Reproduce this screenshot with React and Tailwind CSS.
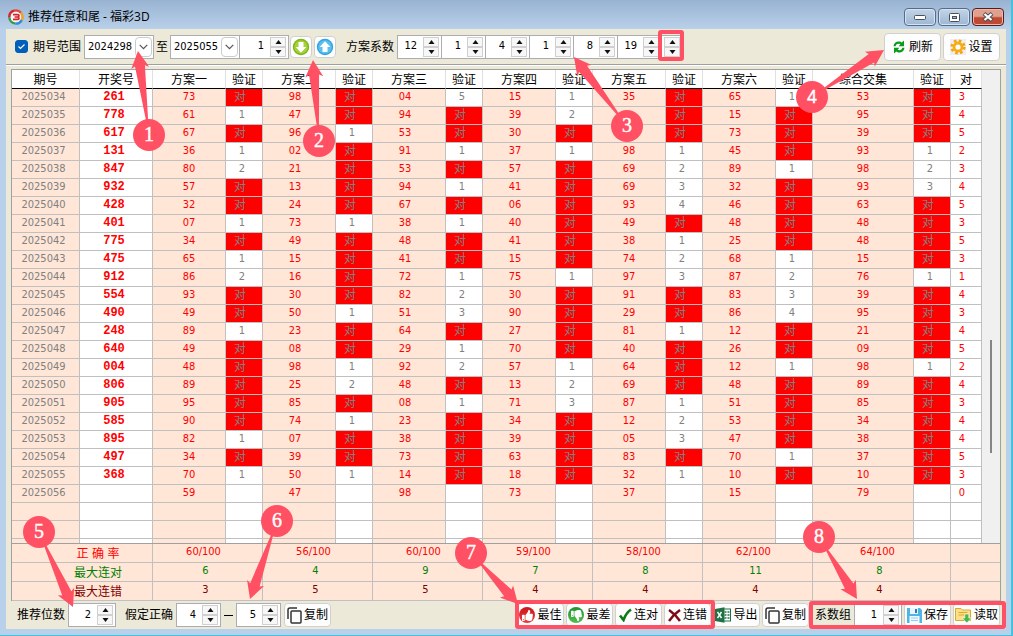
import React, { useState } from 'react';
import { FaThumbsUp, FaThumbsDown } from 'react-icons/fa';

// issue | drawn number | (pick, check) x 6 | combined pick, check | hit count. "x" is a hit
const RAW = `
2025034 261 73 x 98 x 04 5 15 1 35 x 65 1 53 x 3
2025035 778 61 1 47 x 94 x 39 2 - x 15 x 95 x 4
2025036 617 67 x 96 1 53 x 30 x - x 73 x 39 x 5
2025037 131 36 1 02 x 91 1 37 1 98 1 45 x 93 1 2
2025038 847 80 2 21 x 53 x 57 x 69 2 89 1 98 2 3
2025039 932 57 x 13 x 94 1 41 x 69 3 32 x 93 3 4
2025040 428 32 x 24 x 67 x 06 x 93 4 46 x 63 x 5
2025041 401 07 1 73 1 38 1 40 x 49 x 48 x 48 x 3
2025042 775 34 x 49 x 48 x 41 x 38 1 25 x 48 x 5
2025043 475 65 1 15 x 41 x 15 x 74 2 68 1 15 x 3
2025044 912 86 2 16 x 72 1 75 1 97 3 87 2 76 1 1
2025045 554 93 x 30 x 82 2 30 x 91 x 83 3 39 x 4
2025046 490 49 x 50 1 51 3 90 x 29 x 86 4 95 x 3
2025047 248 89 1 23 x 64 x 27 x 81 1 12 x 21 x 4
2025048 640 49 x 08 x 29 1 70 x 40 x 26 x 09 x 5
2025049 004 48 x 98 1 92 2 57 1 64 x 12 1 98 1 2
2025050 806 89 x 25 2 48 x 13 2 69 x 48 x 89 x 4
2025051 905 95 x 85 x 08 1 71 3 87 1 51 x 85 x 3
2025052 585 90 x 74 1 23 x 34 x 12 2 53 x 34 x 4
2025053 895 82 1 07 x 38 x 39 x 05 3 47 x 38 x 4
2025054 497 34 x 39 x 73 x 63 x 83 x 70 1 37 x 5
2025055 368 70 1 50 1 14 x 18 x 32 1 10 x 10 x 3
2025056 - 59 - 47 - 98 - 73 - 37 - 15 - 79 - 0`;

const EMPTY_ROW = Array(17).fill('-');
const ROWS = [...RAW.trim().split('\n').map((l) => l.split(' ')), EMPTY_ROW, EMPTY_ROW, EMPTY_ROW];

const HEADERS = ['期号', '开奖号', '方案一', '验证', '方案二', '验证', '方案三', '验证', '方案四', '验证', '方案五', '验证', '方案六', '验证', '综合交集', '验证', '对'];

const COL_WIDTHS = [
  'w-[68px]', 'w-[73px]',
  'w-[73px]', 'w-[37px]', 'w-[73px]', 'w-[37px]', 'w-[73px]', 'w-[37px]',
  'w-[73px]', 'w-[37px]', 'w-[73px]', 'w-[37px]', 'w-[73px]', 'w-[37px]',
  '', 'w-[37px]', 'w-[31px]',
];

const SUMMARY = [
  { label: '正 确 率', color: 'text-[#ff0000]', pad: 'pr-2', values: ['60/100', '56/100', '60/100', '59/100', '58/100', '62/100', '64/100'] },
  { label: '最大连对', color: 'text-[#008000]', pad: 'pr-1', values: ['6', '4', '9', '7', '8', '11', '8'] },
  { label: '最大连错', color: 'text-[#800000]', pad: 'pr-1', values: ['3', '5', '5', '4', '4', '4', '4'] },
];

const NUM = "font-['DejaVu_Sans_Condensed','DejaVu_Sans','Noto_Sans_CJK_SC',sans-serif] text-[11px]";

const cellClass = (i, value) => {
  if (i === 0) return 'bg-[#ffe6d7] text-[#808080] pr-1';
  if (i === 1) return "bg-white text-[#ff0000] pr-1 font-bold font-['Liberation_Mono',monospace] text-[12px]";
  if (i === 16) return 'bg-white text-[#ff0000] pr-2';
  if (i % 2 === 1) {
    return value === 'x' ? 'bg-[#ff0000] text-[#808080] text-[12px] pr-2' : 'bg-white text-[#808080] pr-1';
  }
  if (i === 2 || i === 10 || i === 14) return 'bg-[#ffe6d7] text-[#ff0000]';
  return 'bg-[#ffe6d7] text-[#ff0000] pr-2';
};

const Combo = ({ value, label }) => (
  <div className="relative w-[70px] h-6 shrink-0">
    <select aria-label={label} defaultValue={value} className={`${NUM} appearance-none w-full h-full pl-[3px] bg-white border border-[#abadb3] outline-none`}>
      <option>{value}</option>
    </select>
    <span className="absolute right-[2px] top-[2px] w-[17px] h-5 bg-white border border-[#cccccc] rounded-sm flex items-center justify-center pointer-events-none">
      <svg width="9" height="6" viewBox="0 0 9 6" fill="none" stroke="#555" strokeWidth="1.2"><path d="M.7.8 4.5 4.6 8.3.8" /></svg>
    </span>
  </div>
);

const SpinButtons = ({ onStep }) => (
  <div className="flex flex-col shrink-0 w-4 h-5">
    <button aria-label="增加" onClick={() => onStep(1)} className="h-[10px] bg-[#f7f7f7] border border-[#d0d0d0] flex items-center justify-center">
      <svg width="7" height="4" viewBox="0 0 7 4"><path d="M3.5 0 6.5 4H.5z" fill="#111" /></svg>
    </button>
    <button aria-label="减少" onClick={() => onStep(-1)} className="h-[10px] bg-[#f7f7f7] border border-[#d0d0d0] flex items-center justify-center">
      <svg width="7" height="4" viewBox="0 0 7 4"><path d="M3.5 4 6.5 0H.5z" fill="#111" /></svg>
    </button>
  </div>
);

const Spinner = ({ initial, label, id, className }) => {
  const [value, setValue] = useState(initial);

  return (
    <div className={`flex items-center h-6 shrink-0 bg-white border border-[#abadb3] pr-[2px] ${className}`}>
      <input
        id={id}
        aria-label={label}
        type="text"
        value={value}
        onChange={(e) => setValue(Number(e.target.value) || 0)}
        className={`${NUM} flex-1 min-w-0 h-full text-right pr-[6px] pb-[2px] bg-transparent outline-none`}
      />
      <SpinButtons onStep={(d) => setValue(value + d)} />
    </div>
  );
};

const ToolButton = ({ icon, children, className = 'w-[47px] h-6' }) => (
  <button className={`flex items-center justify-center gap-[2px] shrink-0 bg-[#fdfdfd] border border-[#d0d0d0] rounded whitespace-nowrap ${className}`}>
    {icon}
    <span>{children}</span>
  </button>
);

const Logo = () => (
  <svg width="16" height="16" viewBox="0 0 16 16" fill="none" strokeWidth="2.4">
    <circle cx="8" cy="8" r="5.5" fill="#f4f4f4" />
    <path d="M1.3 8.5A6.6 6.6 0 0 1 6 1.7" stroke="#d8232a" />
    <path d="M6 1.7A6.6 6.6 0 0 1 13 3.8" stroke="#e8453a" />
    <path d="M13 3.8a6.6 6.6 0 0 1 .8 7.3" stroke="#f0a020" />
    <path d="M13.8 11.1A6.6 6.6 0 0 1 7.5 14.6" stroke="#2d8fd5" />
    <path d="M7.5 14.6A6.6 6.6 0 0 1 1.3 8.5" stroke="#2f9e48" />
    <path d="M5 5.6h4.6q1.4 0 1.4 1.2T9.6 8H6.6 9.6q1.4 0 1.4 1.2T9.6 10.4H5" stroke="#d8232a" strokeWidth="1.7" />
  </svg>
);

const CircleArrow = ({ up }) => (
  <svg width="18" height="18" viewBox="0 0 18 18">
    <circle cx="9" cy="9" r="8.2" fill={up ? '#2fa4e0' : '#7cb51c'} />
    <circle cx="9" cy="9" r="6.8" fill={up ? '#5cc0ef' : '#a3d136'} />
    {up
      ? <path d="M9 3.3 14.3 9h-2.8v5h-5V9H3.7z" fill="#fff" />
      : <path d="M9 14.7 14.3 9h-2.8V4h-5v5H3.7z" fill="#fff" />}
  </svg>
);

const RefreshIcon = () => (
  <svg width="14" height="14" viewBox="0 0 14 14" fill="#0a9a1c">
    <path d="M1.5 6.2C1.8 2.8 4.8.8 8 1.6l1.8.8L12 .4v5.8H6.6l1.8-2C6 3.4 4.2 4 3.6 6.2z" />
    <path d="M12.5 7.8c-.3 3.4-3.3 5.4-6.5 4.6l-1.8-.8L2 13.6V7.8h5.4l-1.800 2c2.400.8 4.200.2 4.800-2z" />
  </svg>
);

const GearIcon = () => (
  <svg width="16" height="16" viewBox="0 0 16 16">
    <rect width="16" height="16" fill="#eeeef2" />
    <circle cx="8" cy="8" r="6.3" fill="none" stroke="#f5a30a" strokeWidth="2.6" strokeDasharray="2.6 2.35" />
    <circle cx="8" cy="8" r="4" fill="#fff" stroke="#f9ab12" strokeWidth="2.8" />
  </svg>
);

const CopyIcon = () => (
  <svg width="15" height="17" viewBox="0 0 15 17" fill="none" stroke="#333" strokeWidth="1.5">
    <path d="M1 12V3q0-2 2-2h7" />
    <rect x="4" y="4" width="10" height="12" rx="1" />
  </svg>
);

const ExcelIcon = () => (
  <svg width="16" height="16" viewBox="0 0 16 16" className="shrink-0">
    <rect x="8" y="2" width="7.5" height="12" fill="#fff" stroke="#1f7246" />
    <path d="M9.5 5h2M12.500 5h2M9.500 8h2M12.500 8h2M9.500 11h2M12.500 11h2" stroke="#1f7246" strokeWidth="1.600" />
    <path d="M0 2 9.5.3v15.4L0 14z" fill="#1f7246" />
    <path d="m2.500 5 4 6M6.500 5l-4 6" stroke="#fff" strokeWidth="1.4" />
  </svg>
);

const SaveIcon = () => (
  <svg width="15" height="15" viewBox="0 0 15 15">
    <path d="M0 0h13l2 2v13H0z" fill="#4fb4e6" />
    <path d="M3 0h8v6H3z" fill="#e9f6fd" />
    <path d="M8 1h2v4H8z" fill="#2c7fb5" />
    <path d="M2.5 8h10v7h-10z" fill="#f4fbff" />
    <path d="M4 10h7M4 12.5h7" stroke="#8ecdee" />
  </svg>
);

const FolderIcon = () => (
  <svg width="17" height="16" viewBox="0 0 17 16">
    <path d="M.5 1.5h5.5l1.5 1.5h8v10.5H.5z" fill="#fbe08a" stroke="#dba928" />
    <path d="M3.5 5.5h9M3.5 8h6" stroke="#dba928" />
    <path d="M9.8 7h4v4h2.700L11.800 16 7.200 11h2.600z" fill="#4cb648" stroke="#fff" strokeWidth=".6" />
  </svg>
);

const CheckIcon = () => (
  <svg width="13" height="14" viewBox="0 0 13 14" fill="none" stroke="#0a7a12" strokeWidth="2.6"><path d="M1 7.5 4.5 12Q7 5 12 1.5" /></svg>
);

const CrossIcon = () => (
  <svg width="13" height="13" viewBox="0 0 13 13" fill="none" stroke="#7d0a14" strokeWidth="2.5"><path d="M1 1q6 4 11 11M12 1Q6 5 1 12" /></svg>
);

const Thumb = ({ down }) => (
  <span className={`w-4 h-4 rounded-full flex items-center justify-center shrink-0 text-white ${down ? 'bg-linear-to-b from-[#1d9430] to-[#52c04f]' : 'bg-linear-to-b from-[#c9161c] to-[#ea3d38]'}`}>
    {down ? <FaThumbsDown size={11} /> : <FaThumbsUp size={11} />}
  </span>
);

const TitleBar = () => (
  <header className="h-[29px] shrink-0 flex items-start justify-between pl-2 pr-[7px] bg-linear-to-b from-[#98b3d1] to-[#b9d0ea]">
    <div className="flex items-center gap-1 pt-[9px]">
      <Logo />
      <h1 className="font-['Open_Sans','Noto_Sans_CJK_SC',sans-serif] text-[12px] leading-4 text-black">推荐任意和尾 - 福彩3D</h1>
    </div>
    <div className="flex gap-[2px] pt-2">
      <button aria-label="最小化" className="w-8 h-[18px] flex items-center justify-center rounded-sm border border-[#566b85] bg-linear-to-b from-[#c3d4e7] to-[#9db7d3] shadow-[inset_0_0_0_1px_#d5e3f2]">
        <svg width="12" height="6" viewBox="0 0 12 6"><rect x=".5" y="1.5" width="11" height="4" rx="1" fill="#fff" stroke="#4a4f5a" /></svg>
      </button>
      <button aria-label="最大化" className="w-8 h-[18px] flex items-center justify-center rounded-sm border border-[#566b85] bg-linear-to-b from-[#c3d4e7] to-[#9db7d3] shadow-[inset_0_0_0_1px_#d5e3f2]">
        <svg width="11" height="9" viewBox="0 0 11 9"><rect x=".5" y=".5" width="10" height="8" rx="1" fill="#fff" stroke="#4a4f5a" /><rect x="3.5" y="3.5" width="4" height="2" fill="#9db7d3" stroke="#4a4f5a" /></svg>
      </button>
      <button aria-label="关闭" className="w-8 h-[18px] flex items-center justify-center rounded-sm border border-[#5c1a1a] bg-linear-to-b from-[#e0a08e] from-45% to-[#bd4a33] to-55% shadow-[inset_0_0_0_1px_#e9b9ab]">
        <svg width="12" height="10" viewBox="0 0 12 10"><path d="M2 1.5l8 7M10 1.5l-8 7" stroke="#4a4f5a" strokeWidth="4" /><path d="M2.5 2l7 6M9.5 2l-7 6" stroke="#fff" strokeWidth="2.2" /></svg>
      </button>
    </div>
  </header>
);

const TopBar = () => (
  <div className="h-[36px] shrink-0 flex items-center pl-[9px] pr-[6px] border-b border-[#a0a0a0] shadow-[0_1px_0_#fff]">
    <label className="flex items-center gap-[5px] shrink-0">
      <span className="relative flex">
        <input type="checkbox" defaultChecked className="peer appearance-none w-[13px] h-[13px] rounded-[3px] border border-[#005fb8] checked:bg-[#005fb8]" />
        <svg className="absolute inset-0 hidden peer-checked:block pointer-events-none" width="13" height="13" viewBox="0 0 13 13" fill="none" stroke="#fff" strokeWidth="1.1"><path d="M3.5 6.5l2 2 4-4" /></svg>
      </span>
      期号范围
    </label>
    <div className="flex items-center gap-[2px] ml-[3px]">
      <Combo value="2024298" label="起始期号" />
      <span className="w-3">至</span>
      <div className="flex items-center">
        <Combo value="2025055" label="结束期号" />
        <Spinner initial={1} label="步长" className="w-[49px] border-l-0" />
      </div>
    </div>
    <div className="flex gap-[2px] ml-[1px]">
      <button aria-label="下移" className="w-[22px] h-[22px] flex items-center justify-center bg-white border border-[#d0d0d0] rounded"><CircleArrow /></button>
      <button aria-label="上移" className="w-[22px] h-[22px] flex items-center justify-center bg-white border border-[#d0d0d0] rounded"><CircleArrow up /></button>
    </div>
    <span className="ml-[10px] mr-[3px] whitespace-nowrap">方案系数</span>
    <div className="flex">
      {[12, 1, 4, 1, 8, 19].map((n, i) => (
        <Spinner key={i} initial={n} label={`方案系数${i + 1}`} className="w-11 border-r-0" />
      ))}
      <div className="flex items-center w-[22px] h-6 pl-[2px] border border-[#abadb3] bg-white">
        <SpinButtons onStep={() => {}} />
      </div>
    </div>
    <div className="flex gap-[2px] ml-auto">
      <ToolButton icon={<RefreshIcon />} className="w-[57px] h-7 gap-[3px]">刷新</ToolButton>
      <ToolButton icon={<GearIcon />} className="w-[57px] h-7">设置</ToolButton>
    </div>
  </div>
);

const DataTable = () => (
  <div className="flex-1 min-h-0 flex overflow-hidden">
    <table className="flex-1 w-full self-start table-fixed border-separate border-spacing-0 text-center">
      <colgroup>
        {COL_WIDTHS.map((w, i) => <col key={i} className={w} />)}
      </colgroup>
      <thead>
        <tr>
          {HEADERS.map((h, i) => (
            <th key={i} className="h-[19px] p-0 pt-[2px] leading-4 font-normal bg-white border-b border-b-black border-r border-r-[#e0e0e0] whitespace-nowrap">{h}</th>
          ))}
        </tr>
      </thead>
      <tbody className={NUM}>
        {ROWS.map((row, r) => (
          <tr key={r}>
            {row.map((v, i) => (
              <td key={i} className={`h-[18px] p-0 pb-[2px] leading-[14px] border-b border-r border-[#c0c0c0] ${cellClass(i, v)}`}>
                {v === 'x' ? '对' : v === '-' ? '' : v}
              </td>
            ))}
          </tr>
        ))}
      </tbody>
    </table>
    <div className="w-[18px] shrink-0 bg-[#f0f0f0] flex flex-col items-center">
      <div className="basis-[57%]"></div>
      <div className="basis-[24%] w-[2px] bg-[#858585]"></div>
    </div>
  </div>
);

const SummaryTable = () => (
  <table className="w-full shrink-0 table-fixed border-separate border-spacing-0 text-center bg-[#ffe6d7] border-t border-[#a0a0a0]">
    <colgroup>
      <col className="w-[141px]" />
      <col className="w-[110px]" span={6} />
      <col />
      <col className="w-[49px]" />
    </colgroup>
    <tbody>
      {SUMMARY.map((row) => (
        <tr key={row.label} className={row.color}>
          <th className="h-[19px] p-0 pl-8 pt-[2px] leading-4 font-normal border-b border-r border-[#c0c0c0]">{row.label}</th>
          {row.values.map((v, i) => (
            <td key={i} className={`${NUM} h-[19px] p-0 pb-[2px] leading-4 border-b border-r border-[#c0c0c0] ${row.pad}`}>{v}</td>
          ))}
          <td className="p-0 border-b border-[#c0c0c0]"></td>
        </tr>
      ))}
    </tbody>
  </table>
);

const BottomBar = () => (
  <div className="h-7 shrink-0 flex items-center justify-between pl-[11px] pr-[6px] whitespace-nowrap">
    <div className="flex items-center gap-[3px]">
      <label htmlFor="digits">推荐位数</label>
      <Spinner id="digits" initial={2} className="w-12" />
      <label htmlFor="right-from" className="ml-[6px]">假定正确</label>
      <Spinner id="right-from" initial={4} className="w-[45px]" />
      <span className="w-[9px] h-px bg-black"></span>
      <Spinner initial={5} label="假定正确上限" className="w-[45px]" />
      <ToolButton icon={<CopyIcon />}>复制</ToolButton>
    </div>
    <div className="flex items-center gap-[2px]">
      <ToolButton icon={<Thumb />}>最佳</ToolButton>
      <ToolButton icon={<Thumb down />}>最差</ToolButton>
      <ToolButton icon={<CheckIcon />}>连对</ToolButton>
      <ToolButton icon={<CrossIcon />}>连错</ToolButton>
      <ToolButton icon={<ExcelIcon />}>导出</ToolButton>
      <ToolButton icon={<CopyIcon />}>复制</ToolButton>
      <label htmlFor="group" className="ml-1 mr-[1px]">系数组</label>
      <Spinner id="group" initial={1} className="w-12" />
      <ToolButton icon={<SaveIcon />}>保存</ToolButton>
      <ToolButton icon={<FolderIcon />}>读取</ToolButton>
    </div>
  </div>
);

// numbered callouts: badge centre and arrow tip
const CALLOUTS = [
  { n: 1, x: 149, y: 135, tx: 138, ty: 51 },
  { n: 2, x: 319, y: 141, tx: 313, ty: 60 },
  { n: 3, x: 627, y: 126, tx: 574, ty: 57 },
  { n: 4, x: 812, y: 97, tx: 884, ty: 50 },
  { n: 5, x: 39, y: 532, tx: 73, ty: 607 },
  { n: 6, x: 277, y: 521, tx: 250, ty: 599 },
  { n: 7, x: 471, y: 553, tx: 518, ty: 604 },
  { n: 8, x: 819, y: 537, tx: 857, ty: 599 },
];

const arrowPoints = ({ x, y, tx, ty }) => {
  const len = Math.hypot(tx - x, ty - y);
  const ux = (tx - x) / len;
  const uy = (ty - y) / len;
  const at = (along, side) => `${x + ux * along - uy * side},${y + uy * along + ux * side}`;
  return [at(14, -1), at(len - 15, -5), at(len - 17, -9), at(len, 0), at(len - 17, 9), at(len - 15, 5), at(14, 1)].join(' ');
};

const Callouts = () => (
  <svg className="absolute left-0 top-0 pointer-events-none" width="1013" height="636" viewBox="0 0 1013 636">
    <g fill="none" stroke="#ff5163" strokeWidth="4">
      <rect x="660" y="32" width="22" height="27" rx="1" />
      <rect x="517" y="602" width="196" height="25" rx="1" />
      <rect x="811" y="603" width="193" height="24" rx="1" />
    </g>
    {CALLOUTS.map((c) => (
      <g key={c.n} fill="#ff5163">
        <polygon points={arrowPoints(c)} />
        <circle cx={c.x} cy={c.y} r="16" />
        <text
          x={c.x}
          y={c.y + 6}
          textAnchor="middle"
          fill="#fff"
          stroke="#fff"
          strokeWidth=".4"
          className={c.n === 4 ? "font-['Liberation_Sans',sans-serif] text-[18px]" : "font-['Liberation_Serif',serif] text-[20px]"}
        >
          {c.n}
        </text>
      </g>
    ))}
  </svg>
);

const App = () => {
  return (
    <div className="relative h-screen flex flex-col overflow-hidden bg-[#b9d0ea] border-b border-r-2 border-[#3cc4e4] font-['DejaVu_Sans_Condensed','DejaVu_Sans','Noto_Sans_CJK_SC',sans-serif] text-[12px] leading-4 text-black">
      <TitleBar />
      <main className="flex-1 min-h-0 flex flex-col ml-[6px] mr-[5px] mb-[6px] bg-[#ece9d8]">
        <TopBar />
        <section className="flex-1 min-h-0 flex flex-col mt-1 mx-[5px] border-t border-x border-[#a0a0a0]">
          <DataTable />
          <SummaryTable />
        </section>
        <BottomBar />
      </main>
      <Callouts />
    </div>
  );
};

export default App;
